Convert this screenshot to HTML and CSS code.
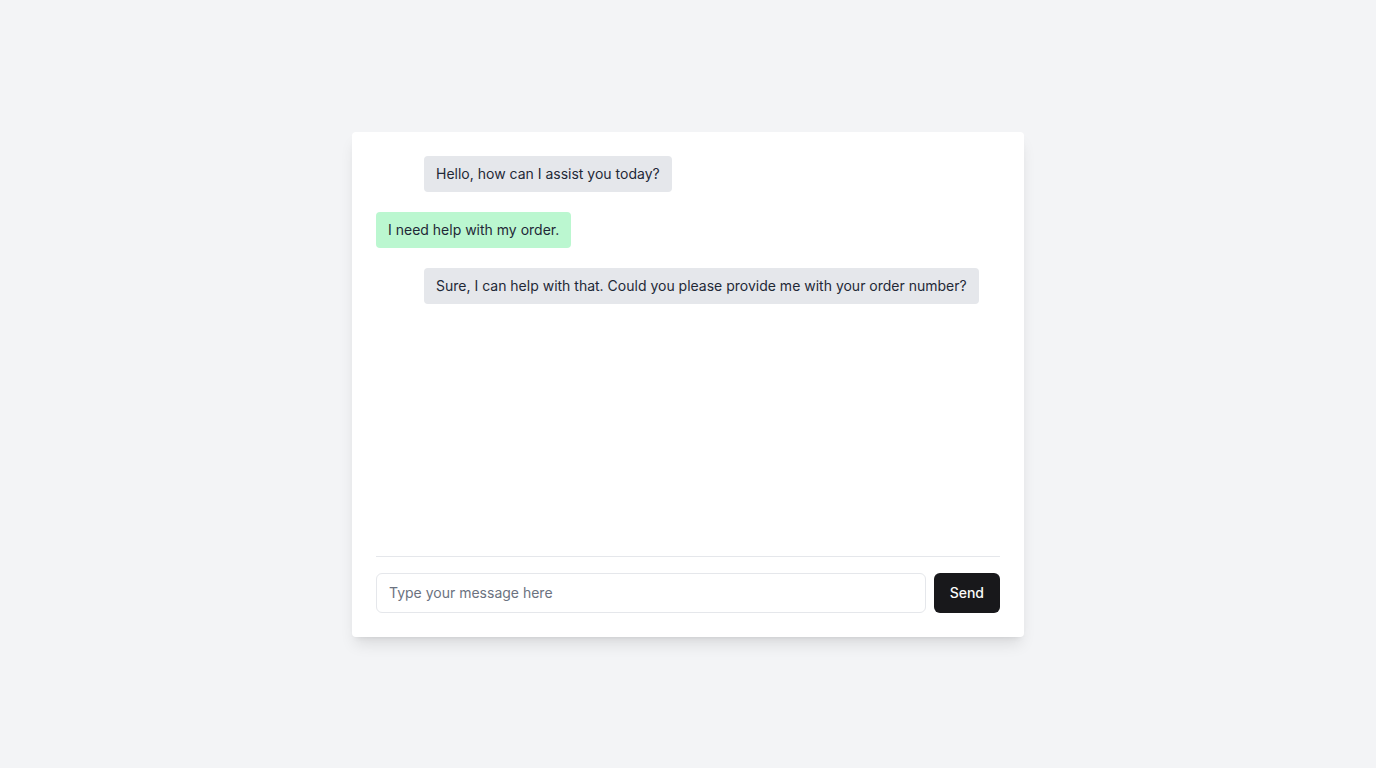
FILE: index.html
```html
<!DOCTYPE html>
<html lang="en">
<head>
<meta charset="utf-8">
<title>Chat</title>
<link rel="stylesheet" href="styles.css">
</head>
<body>
<div class="page">
  <div class="card">
    <div class="messages">
      <div class="msg bot">Hello, how can I assist you today?</div>
      <div class="msg user">I need help with my order.</div>
      <div class="msg bot">Sure, I can help with that. Could you please provide me with your order number?</div>
    </div>
    <div class="composer">
      <input class="input" type="text" placeholder="Type your message here">
      <button class="send">Send</button>
    </div>
  </div>
</div>
</body>
</html>
```
FILE: styles.css
```css
* { box-sizing: border-box; }
html, body { margin: 0; padding: 0; }
body {
  background: #f3f4f6;
  font-family: Inter, "Noto Sans", sans-serif;
  font-size: 14px;
  line-height: 20px;
  color: #1f2937;
}
.page {
  min-height: 100vh;
  display: flex;
  align-items: center;
  justify-content: center;
}
.card {
  width: 672px;
  background: #fff;
  border-radius: 4px;
  box-shadow: 0 10px 15px -3px rgba(0,0,0,0.1), 0 4px 6px -4px rgba(0,0,0,0.1);
  padding: 24px;
  display: flex;
  flex-direction: column;
}
.messages {
  height: 400px;
  display: flex;
  flex-direction: column;
  align-items: flex-start;
  gap: 20px;
}
.msg {
  padding: 8px 12px;
  border-radius: 4px;
}
.bot {
  background: #e5e7eb;
  margin-left: 48px;
}
.user {
  background: #bbf7d0;
}
.composer {
  border-top: 1px solid #e5e7eb;
  padding-top: 16px;
  display: flex;
  gap: 8px;
}
.input {
  flex: 1;
  height: 40px;
  border: 1px solid #e5e7eb;
  border-radius: 6px;
  padding: 0 12px;
  font-family: inherit;
  font-size: 14px;
  color: #1f2937;
  outline: none;
}
.input::placeholder { color: #6b7280; }
.send {
  height: 40px;
  padding: 0 16px;
  border: none;
  border-radius: 6px;
  background: #18181b;
  color: #fafafa;
  font-family: inherit;
  font-size: 14px;
  font-weight: 500;
}
```
